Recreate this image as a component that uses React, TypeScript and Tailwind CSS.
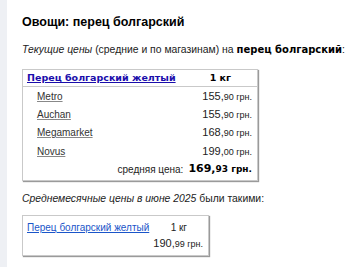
const stores = [
  { name: 'Metro', whole: '155', cents: '90' },
  { name: 'Auchan', whole: '155', cents: '90' },
  { name: 'Megamarket', whole: '168', cents: '90' },
  { name: 'Novus', whole: '199', cents: '00' },
];

function Price({ whole, cents }: { whole: string; cents: string }) {
  return (
    <span className="text-[11px] text-[#222]">
      {whole},<span className="text-[9px]">{cents} грн.</span>
    </span>
  );
}

export default function App() {
  return (
    <div className="flex h-[267px] w-[360px] overflow-hidden bg-white font-['Liberation_Sans',Arial,sans-serif]">
      {/* left rail */}
      <div className="w-[7px] bg-[#eef0f4]" />
      <div className="flex-1 pl-[15px] pt-[14px]">
        <h1 className="text-[12.5px] font-bold leading-[17px] text-black">Овощи: перец болгарский</h1>

        <p className="mt-[12px] whitespace-nowrap text-[10.4px] leading-[14px] text-[#222]">
          <i>Текущие цены</i> (средние и по магазинам) на{' '}
          <b className="font-['DejaVu_Sans',Verdana,sans-serif] text-[10px] text-black">перец болгарский</b>:
        </p>

        <div className="mt-[12px] w-[236px] border border-[#c9c9c9] shadow-[1px_1px_1px_#9a9a9a]">
          <div className="flex h-[17px] items-center border-b border-[#c9c9c9] pl-[4px] pr-[26px] font-['DejaVu_Sans',Verdana,sans-serif] text-[9.5px] font-bold">
            <a href="#" className="flex-1 text-[#1a0dab] underline">Перец болгарский желтый</a>
            <span className="text-black">1 кг</span>
          </div>
          <div className="pb-[2px]">
            {stores.map((s) => (
              <div key={s.name} className="flex h-[18.3px] items-center pl-[14px] pr-[5px]">
                <a href="#" className="flex-1 text-[10px] text-[#333] underline decoration-[#888]">{s.name}</a>
                <Price whole={s.whole} cents={s.cents} />
              </div>
            ))}
            <div className="flex h-[18px] items-center justify-end gap-[5px] pr-[5px]">
              <span className="text-[10px] text-[#222]">средняя цена:</span>
              <span className="font-['DejaVu_Sans',Verdana,sans-serif] text-[11px] font-bold text-black">
                169,<span className="text-[9px]">93 грн.</span>
              </span>
            </div>
          </div>
        </div>

        <p className="mt-[11px] whitespace-nowrap text-[10.4px] leading-[14px] text-[#222]">
          <i>Среднемесячные цены в июне 2025</i> были такими:
        </p>

        <div className="mt-[9px] w-[187px] border border-[#c9c9c9] px-[4px] py-[3px] shadow-[1px_1px_1px_#9a9a9a]">
          <div className="flex h-[16px] items-center pr-[17px]">
            <a href="#" className="flex-1 text-[10px] text-[#1a55c9] underline">Перец болгарский желтый</a>
            <span className="text-[10px] text-[#222]">1 кг</span>
          </div>
          <div className="flex h-[17px] items-center justify-end pr-[1px]">
            <Price whole="190" cents="99" />
          </div>
        </div>
      </div>
    </div>
  );
}
